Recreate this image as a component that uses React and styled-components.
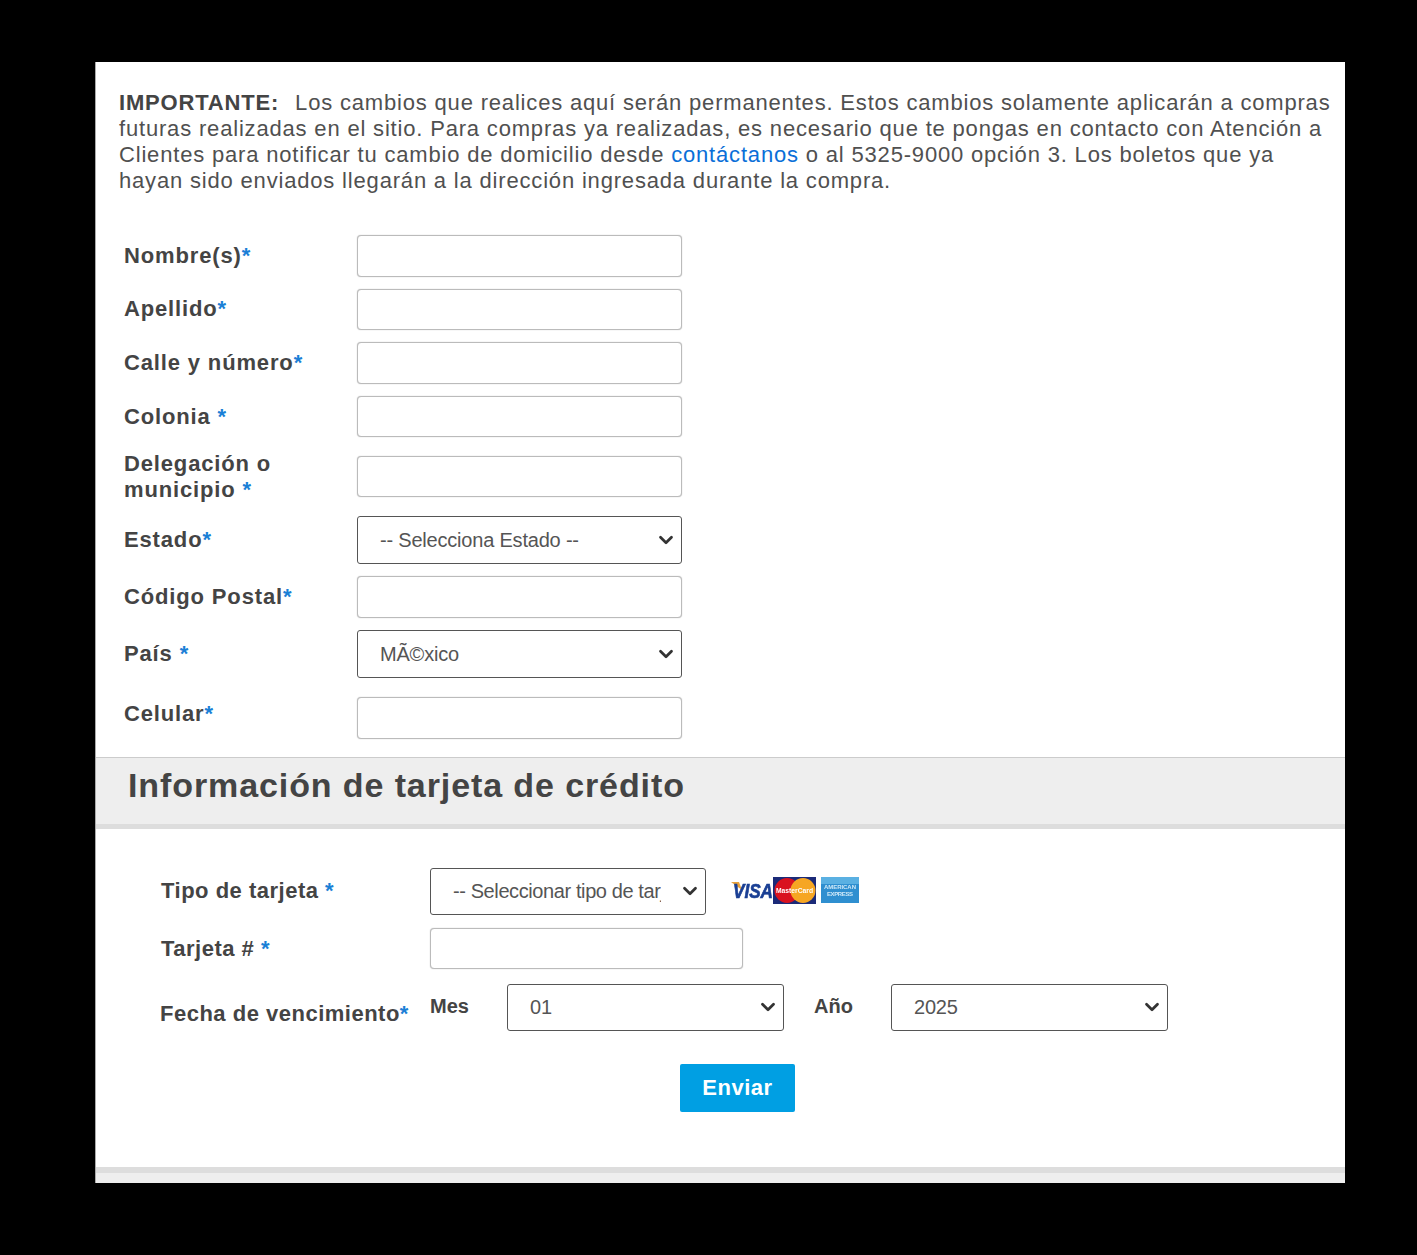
import React from 'react';
import styled, { createGlobalStyle } from 'styled-components';
import { ChevronDown } from 'lucide-react';

const GlobalStyle = createGlobalStyle`
  * { box-sizing: border-box; }
  body {
    margin: 0;
    background: #000;
    font-family: "Liberation Sans", Arial, sans-serif;
    color: #444;
  }
`;

const Page = styled.div`
  width: 1417px;
  height: 1255px;
  padding: 62px 72px 72px 95px;
  background: #000;
`;

const Panel = styled.main`
  width: 1250px;
  height: 1121px;
  background: #fff;
  border-left: 1px solid #aaa;
  display: flex;
  flex-direction: column;
`;

const Notice = styled.p`
  margin: 0;
  padding: 28px 12px 0 23px;
  font-size: 22px;
  line-height: 26px;
  letter-spacing: 0.82px;
  color: #505050;
`;

const NoticeLead = styled.strong`
  color: #444;
  margin-right: 9px;
`;

const NoticeLink = styled.a`
  color: #0a6fd8;
  text-decoration: none;
`;

const AddressForm = styled.form`
  display: flex;
  flex-direction: column;
  gap: 12px;
  padding: 41px 0 18px 28px;
`;

const Row = styled.div`
  display: flex;
  align-items: center;
  min-height: ${(p) => (p.$tall ? '54.4px' : '0')};
  margin-top: ${(p) => p.$top || 0}px;
`;

const Label = styled.label`
  width: 233px;
  flex: none;
  font-size: 22px;
  line-height: 26px;
  font-weight: 700;
  color: #444;
  letter-spacing: 0.85px;
  padding-bottom: ${(p) => p.$lift || 0}px;
`;

const Req = styled.span`
  color: #1a7fd6;
`;

const TextInput = styled.input`
  width: ${(p) => p.$width}px;
  height: 41.6px;
  flex: none;
  background: #fff;
  border: 1px solid #bbb;
  border-radius: 4px;
  box-shadow: 0 0 1px #aaa;
`;

const SelectWrap = styled.div`
  position: relative;
  flex: none;
  width: ${(p) => p.$width}px;
  height: ${(p) => p.$height}px;
`;

const Select = styled.select`
  appearance: none;
  width: 100%;
  height: 100%;
  padding: 0 44px 0 22px;
  background: #fff;
  border: 1px solid #555;
  border-radius: 3px;
  font-family: "Liberation Sans", Arial, sans-serif;
  font-size: 20px;
  letter-spacing: ${(p) => (p.$tight ? '-0.4px' : '-0.2px')};
  color: #555;
`;

const Arrow = styled(ChevronDown)`
  position: absolute;
  right: 5px;
  top: 50%;
  transform: translateY(-50%);
  color: #333;
  pointer-events: none;
`;

const SectionBar = styled.div`
  height: 72px;
  flex: none;
  padding: 7px 0 0 32px;
  background: #eee;
  border-top: 1px solid #ccc;
  border-bottom: 5px solid #ddd;
`;

const SectionTitle = styled.h2`
  margin: 0;
  font-size: 34px;
  line-height: 40px;
  font-weight: 700;
  color: #444;
  letter-spacing: 0.9px;
`;

const CardForm = styled.form`
  display: flex;
  flex-direction: column;
  padding: 39px 0 0 65px;
`;

const CardRow = styled.div`
  display: flex;
  align-items: center;
  margin-top: ${(p) => p.$top || 0}px;
`;

const CardLabel = styled.label`
  width: 269px;
  flex: none;
  font-size: 22px;
  line-height: 26px;
  font-weight: 700;
  color: #444;
  letter-spacing: 0.5px;
`;

const ExpiryLabel = styled(CardLabel)`
  margin-left: -1px;
  width: 270px;
  padding-top: 13px;
`;

const SmallLabel = styled.label`
  width: 77px;
  flex: none;
  font-size: 20px;
  font-weight: 700;
  color: #444;
  padding-bottom: 2px;
`;

const Spacer = styled.div`
  width: 30px;
  flex: none;
`;

const Logos = styled.svg`
  margin-left: 25px;
  flex: none;
  filter: blur(0.4px);
`;

const Submit = styled.button`
  align-self: flex-start;
  margin: 33px 0 0 519px;
  width: 115px;
  height: 48px;
  background: #009fe3;
  border: none;
  border-radius: 2px;
  color: #fff;
  font-family: "Liberation Sans", Arial, sans-serif;
  font-size: 22px;
  font-weight: 700;
  letter-spacing: 0.5px;
`;

const Footer = styled.div`
  margin-top: auto;
  height: 16px;
  background: #eee;
  border-top: 6px solid #ddd;
`;

const CardLogos = () => (
  <Logos width="130" height="28" viewBox="0 0 130 28">
    <path d="M0 5 L8 5 L11 13 Z" fill="#e9a23b" />
    <text x="2" y="21" fontFamily="Liberation Sans" fontSize="21" fontWeight="700" fontStyle="italic" fill="#1a3f94" stroke="#1a3f94" strokeWidth="0.7" textLength="40" lengthAdjust="spacingAndGlyphs">VISA</text>
    <rect x="42" y="0" width="43" height="27" fill="#1b2a78" />
    <circle cx="56" cy="13.5" r="12.5" fill="#d9121f" />
    <circle cx="72" cy="13.5" r="12.5" fill="#f6a623" />
    <text x="45" y="16" fontFamily="Liberation Sans" fontSize="8" fontWeight="700" fill="#fff" textLength="37" lengthAdjust="spacingAndGlyphs">MasterCard</text>
    <rect x="90" y="0" width="38" height="26" fill="#2f8fd0" />
    <rect x="90" y="0" width="38" height="7" fill="#5ab0e2" />
    <text x="93" y="12" fontFamily="Liberation Sans" fontSize="6" fontWeight="700" fill="#cfe9f8" textLength="32">AMERICAN</text>
    <text x="96" y="19" fontFamily="Liberation Sans" fontSize="6" fontWeight="700" fill="#cfe9f8" textLength="26">EXPRESS</text>
  </Logos>
);

const DropDown = ({ width, height = 48.4, value, tight }) => (
  <SelectWrap $width={width} $height={height}>
    <Select defaultValue={value} $tight={tight}>
      <option>{value}</option>
    </Select>
    <Arrow size={22} strokeWidth={3} />
  </SelectWrap>
);

const App = () => (
  <Page>
    <GlobalStyle />
    <Panel>
      <Notice>
        <NoticeLead>IMPORTANTE:</NoticeLead>
        {' '}Los cambios que realices aquí serán permanentes. Estos cambios solamente aplicarán a compras futuras realizadas en el sitio. Para compras ya realizadas, es necesario que te pongas en contacto con Atención a Clientes para notificar tu cambio de domicilio desde <NoticeLink href="#">contáctanos</NoticeLink> o al 5325-9000 opción 3. Los boletos que ya hayan sido enviados llegarán a la dirección ingresada durante la compra.
      </Notice>

      <AddressForm>
        <Row>
          <Label>Nombre(s)<Req>*</Req></Label>
          <TextInput $width={325} />
        </Row>
        <Row>
          <Label>Apellido<Req>*</Req></Label>
          <TextInput $width={325} />
        </Row>
        <Row>
          <Label>Calle y número<Req>*</Req></Label>
          <TextInput $width={325} />
        </Row>
        <Row>
          <Label>Colonia <Req>*</Req></Label>
          <TextInput $width={325} />
        </Row>
        <Row $tall>
          <Label>Delegación o<br />municipio <Req>*</Req></Label>
          <TextInput $width={325} />
        </Row>
        <Row>
          <Label>Estado<Req>*</Req></Label>
          <DropDown width={325} value="-- Selecciona Estado --" />
        </Row>
        <Row>
          <Label>Código Postal<Req>*</Req></Label>
          <TextInput $width={325} />
        </Row>
        <Row>
          <Label>País <Req>*</Req></Label>
          <DropDown width={325} value="MÃ©xico" />
        </Row>
        <Row $top={7}>
          <Label $lift={7}>Celular<Req>*</Req></Label>
          <TextInput $width={325} />
        </Row>
      </AddressForm>

      <SectionBar>
        <SectionTitle>Información de tarjeta de crédito</SectionTitle>
      </SectionBar>

      <CardForm>
        <CardRow>
          <CardLabel>Tipo de tarjeta <Req>*</Req></CardLabel>
          <DropDown width={276} height={47} tight value="-- Seleccionar tipo de tarjeta --" />
          <CardLogos />
        </CardRow>
        <CardRow $top={13}>
          <CardLabel>Tarjeta # <Req>*</Req></CardLabel>
          <TextInput $width={313} />
        </CardRow>
        <CardRow $top={14.5}>
          <ExpiryLabel>Fecha de vencimiento<Req>*</Req></ExpiryLabel>
          <SmallLabel>Mes</SmallLabel>
          <DropDown width={277} height={47} value="01" />
          <Spacer />
          <SmallLabel>Año</SmallLabel>
          <DropDown width={277} height={47} value="2025" />
        </CardRow>
        <Submit type="button">Enviar</Submit>
      </CardForm>

      <Footer />
    </Panel>
  </Page>
);

export default App;
